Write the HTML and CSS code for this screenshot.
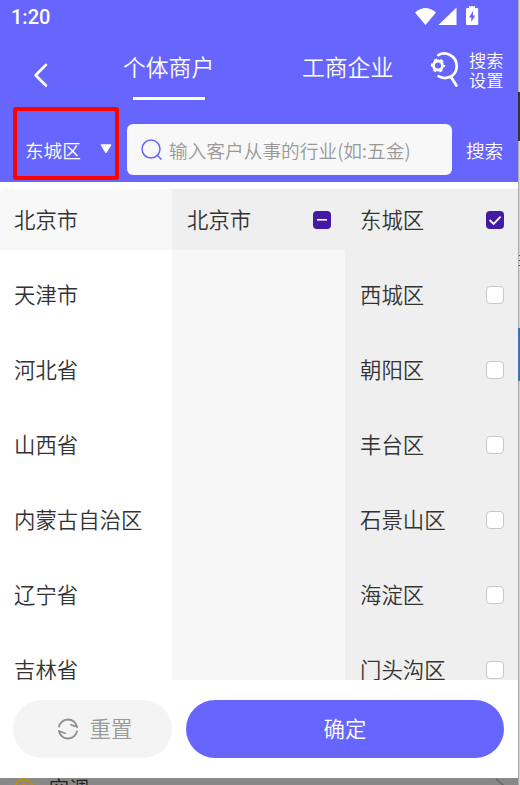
FILE: index.html
```html
<!DOCTYPE html>
<html lang="zh-CN">
<head>
<meta charset="utf-8">
<title>选择地区</title>
<link rel="stylesheet" href="styles.css">
</head>
<body>
<div class="screen">
  <main class="phone">
    <header class="header">
      <div class="status">
        <span class="clock">1:20</span>
        <svg class="status-icons" width="66" height="22" viewBox="0 0 66 22" fill="#fff">
          <path d="M0 6.4Q10.5-2.6 21 6.4L10.5 19Z"/>
          <path d="M41.5 1.5V19H23.5Z"/>
          <path fill-rule="evenodd" d="M54 .3h6v1.7h2q1.2 0 1.2 1.2v14.5q0 1.4-1.3 1.4h-9.6q-1.3 0-1.3-1.4V3.2Q51 2 52.2 2H54ZM58 5l-4 6.5h2.3V16l4-6.5H58Z"/>
        </svg>
      </div>
      <nav class="nav">
        <svg class="back" width="18" height="26" viewBox="0 0 18 26" fill="none" stroke="#fff" stroke-width="2.7" stroke-linecap="round" stroke-linejoin="round"><path d="M14.9 3L4.6 13.2 14.9 23.5"/></svg>
        <div class="tab active">个体商户</div>
        <div class="tab">工商企业</div>
        <svg class="settings-icon" width="30" height="36" viewBox="0 0 30 36" fill="none" stroke="#fff">
          <path d="M8.4 4.1C15 .1 26.7 4 26.7 15.2c0 10.6-11.2 14.2-18.2 10" stroke-width="2.7" stroke-linecap="round"/>
          <path d="M21.2 26.2l5.2 8.3" stroke-width="2.8" stroke-linecap="round"/>
          <circle cx="8" cy="14.5" r="4.5" stroke-width="2.8"/>
          <circle cx="8" cy="14.5" r="6" stroke-width="2.2" stroke-dasharray="3 3.283" stroke-dashoffset="1.5"/>
        </svg>
        <div class="settings"><span>搜索</span><span>设置</span></div>
      </nav>
      <div class="searchbar">
        <div class="region"><span>东城区</span><svg width="12" height="10" viewBox="0 0 12 10"><path d="M1.5 1h9L6 8.3Z" fill="#fff" stroke="#fff" stroke-width="1.5" stroke-linejoin="round"/></svg></div>
        <div class="field">
          <svg width="22" height="22" viewBox="0 0 22 22" fill="none" stroke="#66f" stroke-width="1.5" stroke-linecap="round"><circle cx="10" cy="10" r="9"/><path d="M16.5 16.5l3.4 3.6"/></svg>
          <span>输入客户从事的行业(如:五金)</span>
        </div>
        <div class="search-btn">搜索</div>
      </div>
    </header>
    <section class="picker">
      <ul class="column provinces">
        <li class="selected">北京市</li><li>天津市</li><li>河北省</li><li>山西省</li><li>内蒙古自治区</li><li>辽宁省</li><li>吉林省</li>
      </ul>
      <ul class="column cities">
        <li class="selected">北京市<i class="box on"><svg width="18" height="18" viewBox="0 0 18 18"><path d="M4 8.8h10" stroke="#fff" stroke-width="1.6"/></svg></i></li>
      </ul>
      <ul class="column districts">
        <li>东城区<i class="box on"><svg width="18" height="18" viewBox="0 0 18 18"><path d="M3.6 9l4 3.9L14.6 5.6" fill="none" stroke="#fff" stroke-width="1.8"/></svg></i></li>
        <li>西城区<i class="box"></i></li>
        <li>朝阳区<i class="box"></i></li>
        <li>丰台区<i class="box"></i></li>
        <li>石景山区<i class="box"></i></li>
        <li>海淀区<i class="box"></i></li>
        <li>门头沟区<i class="box"></i></li>
      </ul>
    </section>
    <footer class="actions">
      <button class="reset"><svg width="22" height="22" viewBox="0 0 22 22" fill="none" stroke="#8f8f8f" stroke-width="1.8" stroke-linejoin="round"><path d="M1.8 9.3A9.3 9.3 0 0 1 20.1 9L13.2 6.5"/><path d="M20.2 12.7A9.3 9.3 0 0 1 1.9 13L8.8 15.5"/></svg><span>重置</span></button>
      <button class="confirm"><span>确定</span></button>
    </footer>
    <div class="behind">
      <svg class="coin" width="20" height="20" viewBox="0 0 20 20" fill="none" stroke="#c48f00" stroke-width="1.8"><circle cx="10" cy="10" r="8.8"/><path d="M10 1v3M7.5 8L10 6l2.5 2"/></svg>
      <span>空调</span>
      <svg class="more" width="10" height="14" viewBox="0 0 10 14" fill="none" stroke="#666" stroke-width="1.5"><path d="M1 1l7 6-7 6"/></svg>
    </div>
  </main>
  <aside class="edge"><i class="dark"></i><i class="lines"></i><i class="blue"></i></aside>
</div>
</body>
</html>
```

FILE: styles.css
```css
* { box-sizing: border-box; }
body { margin: 0; font-family: "Noto Sans CJK SC", sans-serif; font-weight: 350; }
.screen { display: flex; width: 520px; height: 785px; overflow: hidden; background: #fff; }
.phone { width: 518px; height: 785px; display: flex; flex-direction: column; overflow: hidden; }
.header { height: 182px; flex: none; background: #66f; color: #fff; }
.status { height: 34px; display: flex; justify-content: space-between; padding: 6px 37px 0 11px; }
.clock { font: 500 20px/22px Roboto, sans-serif; }
.status-icons { width: 66px; }
.nav { height: 73px; display: flex; align-items: flex-start; padding-left: 31px; }
.back { margin-top: 28px; }
.tab { width: 91px; height: 66px; margin-left: 74px; padding-top: 17px; font-size: 22.8px; line-height: 32px; white-space: nowrap; }
.tab + .tab { margin-left: 88px; }
.tab.active::after { content: ""; display: block; width: 72px; height: 3px; margin: 14px auto 0 10px; background: #fff; }
.settings-icon { margin: 17px 0 0 37px; }
.settings { display: flex; flex-direction: column; margin: 16px 0 0 9px; font-size: 17.2px; line-height: 20px; white-space: nowrap; }
.searchbar { height: 75px; display: flex; align-items: flex-start; padding-left: 13px; }
.region { width: 106px; height: 73px; display: flex; align-items: center; justify-content: space-between; padding: 12px 3px 0 8px; border: 4px solid #f00; border-radius: 3px; font-size: 18.6px; white-space: nowrap; }
.region svg { margin-top: -1px; }
.field { width: 325px; height: 51px; margin: 17px 0 0 8px; padding-left: 14px; display: flex; align-items: center; border-radius: 6px; background: #f8f8f8; color: #999; font-size: 18.7px; white-space: nowrap; }
.field span { margin-left: 6px; }
.search-btn { margin: 29px 0 0 14px; font-size: 18.6px; line-height: 27px; white-space: nowrap; }
.picker { flex: none; height: 491px; margin-top: 7px; display: grid; grid-template-columns: 172px 173px 173px; overflow: hidden; }
.column { list-style: none; margin: 0; padding: 0; display: flex; flex-direction: column; gap: 14px; color: #333; font-size: 21.4px; }
.column li { height: 61px; flex: none; display: flex; align-items: center; justify-content: space-between; padding: 0 14px 2px 15px; white-space: nowrap; }
.provinces li { padding-left: 14px; }
.provinces .selected { background: #f8f8f8; }
.cities { background: #f7f7f7; }
.cities .selected, .districts { background: #efefef; }
.box { width: 18px; height: 18px; margin-top: 3px; border: 1px solid #c8c8c8; border-radius: 4px; background: #fff; }
.box.on { border: 0; background: #421aa3; }
.box svg { display: block; }
.actions { flex: none; height: 98px; display: flex; gap: 14px; padding: 20px 14px 0 13px; }
button { height: 58px; border: 0; border-radius: 29px; padding: 0; display: flex; align-items: center; justify-content: center; font: inherit; font-size: 21.4px; }
button span { padding-bottom: 3px; }
.reset { width: 159px; gap: 11px; padding-left: 4px; background: #f4f4f4; color: #999; }
.confirm { width: 318px; background: #66f; color: #fff; }
.behind { height: 7px; flex: none; display: flex; align-items: flex-start; padding: 0 13px 0 14px; background: #888; overflow: hidden; color: #222; font-size: 20px; line-height: 20px; }
.behind span { margin-left: 15px; }
.more { margin-left: auto; }
.edge { width: 2px; height: 785px; display: flex; flex-direction: column; background: #d4d4d4; border-left: 1px solid #aaa; }
.edge i { display: block; flex: none; }
.dark { height: 49px; margin: 92px 0 0 -1px; background: #333; }
.lines { height: 14px; margin-top: 114px; background: repeating-linear-gradient(#555 0 1px, #ddd 1px 5px); }
.blue { height: 53px; margin: 59px 0 0 -1px; background: #3976b8; }
```
